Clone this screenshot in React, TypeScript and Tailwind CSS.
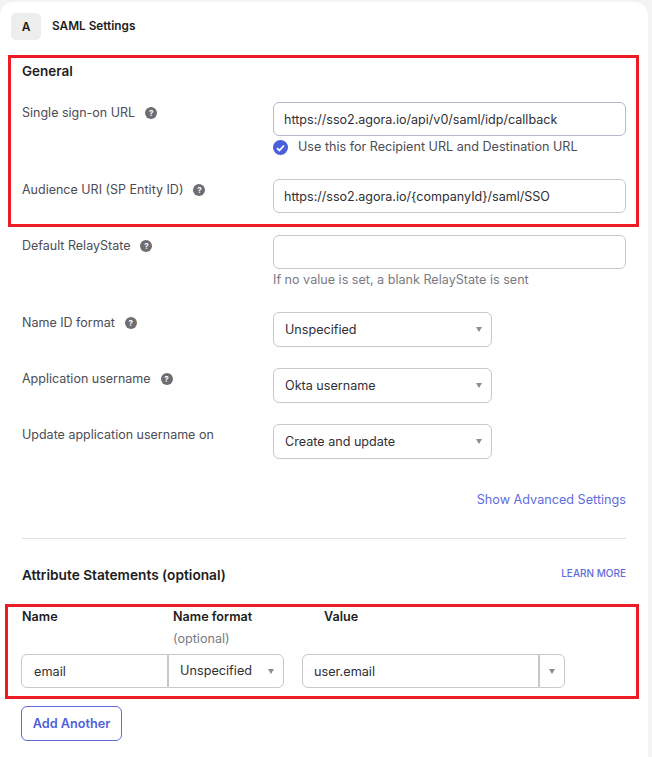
import type { ReactNode } from "react";

function HelpIcon() {
  return (
    <span className="ml-[10px] flex h-3 w-3 shrink-0 items-center justify-center rounded-full bg-[#6e6e72] text-[8px] font-bold leading-none text-white">
      ?
    </span>
  );
}

function Caret() {
  return <span className="h-0 w-0 border-x-[3px] border-t-[5px] border-x-transparent border-t-[#8c8c96]" />;
}

function SelectBox({ value }: { value: string }) {
  return (
    <div className="flex h-[35px] w-[219px] items-center justify-between rounded-[6px] border border-[#c8c8c8] pl-[11px] pr-[9px] text-[12.6px] text-[#2f2f36]">
      <span className="translate-y-px">{value}</span>
      <Caret />
    </div>
  );
}

function TextBox({ value, border = "border-[#c8c8c8]" }: { value?: string; border?: string }) {
  return (
    <div className={`flex h-[34px] w-[353px] items-center rounded-[6px] border pl-[10px] text-[12.55px] text-[#2f2f36] ${border}`}>
      <span className="translate-y-px">{value}</span>
    </div>
  );
}

function Row({ label, help, className, children }: { label: string; help?: boolean; className: string; children: ReactNode }) {
  return (
    <div className={`flex ${className}`}>
      <div className="flex h-[20px] w-[251px] shrink-0 translate-y-px items-center text-[12.5px] text-[#4c4c54]">
        {label}
        {help && <HelpIcon />}
      </div>
      <div>{children}</div>
    </div>
  );
}

export default function App() {
  return (
    <div className="relative h-[757px] w-[652px] overflow-hidden bg-[#f3f3f3] pt-[2px] font-['Inter',sans-serif]">
      <div className="h-[755px] w-[648px] rounded-t-[14px] bg-white">
        <div className="flex items-center pl-[11px] pt-[11px]">
          <div className="flex h-[27px] w-[30px] items-center justify-center rounded-[5px] bg-[#ededed] text-[12px] font-semibold text-[#1d1d21]">
            A
          </div>
          <div className="ml-[11px] text-[11.8px] font-semibold text-[#1d1d21]">SAML Settings</div>
        </div>

        <div className="ml-[22px] mr-[22px]">
          <h2 className="mt-[22px] h-[18px] text-[13.5px] font-semibold leading-[18px] text-[#1d1d21]">General</h2>

          <Row label="Single sign-on URL" help className="mt-[22px]">
            <TextBox value="https://sso2.agora.io/api/v0/saml/idp/callback" border="border-[#b4b7cf]" />
            <div className="mt-[1px] flex h-[21px] items-center text-[12.6px] text-[#4c4c54]">
              <span className="flex h-[15px] w-[15px] items-center justify-center rounded-full bg-[#4b5fdc]">
                <svg width="9" height="8" viewBox="0 0 9 8" fill="none">
                  <path d="M1 4.2 3.4 6.5 8 1.5" stroke="white" strokeWidth="1.8" />
                </svg>
              </span>
              <span className="ml-[10px]">Use this for Recipient URL and Destination URL</span>
            </div>
          </Row>

          <Row label="Audience URI (SP Entity ID)" help className="mt-[21px]">
            <TextBox value="https://sso2.agora.io/{companyId}/saml/SSO" />
          </Row>

          <Row label="Default RelayState" help className="mt-[22px]">
            <TextBox />
            <p className="h-[22px] text-[12.6px] leading-[21px] text-[#7a7a82]">If no value is set, a blank RelayState is sent</p>
          </Row>

          <Row label="Name ID format" help className="mt-[21px]">
            <SelectBox value="Unspecified" />
          </Row>

          <Row label="Application username" help className="mt-[21px]">
            <SelectBox value="Okta username" />
          </Row>

          <Row label="Update application username on" className="mt-[21px]">
            <SelectBox value="Create and update" />
          </Row>

          <div className="mt-[32px] text-right text-[12.65px] leading-[18px] text-[#5f6ce0]">Show Advanced Settings</div>

          <div className="mt-[29px] h-px w-[604px] bg-[#e2e2e2]" />

          <div className="mt-[27px] flex items-center justify-between">
            <h2 className="h-[18px] text-[13.7px] font-semibold leading-[18px] text-[#1d1d21]">Attribute Statements (optional)</h2>
            <span className="-translate-y-[2px] text-[10px] font-medium text-[#5f6ce0]">LEARN MORE</span>
          </div>

          <div className="mt-[24px] flex h-[18px] text-[12.6px] font-semibold leading-[18px] text-[#1d1d21]">
            <span className="w-[151px]">Name</span>
            <span className="w-[151px]">Name format</span>
            <span>Value</span>
          </div>
          <div className="ml-[151px] mt-[4px] h-[18px] text-[12.6px] leading-[18px] text-[#7a7a82]">(optional)</div>

          <div className="-ml-px mt-[6px] flex text-[12.7px] text-[#2f2f36]">
            <div className="flex h-[34px] w-[147px] items-center rounded-l-[6px] border border-[#c8c8c8] pl-[12px] pt-px">email</div>
            <div className="flex h-[34px] w-[116px] items-center justify-between rounded-r-[6px] border border-[#c8c8c8] pl-[11px] pr-[9px]">
              <span>Unspecified</span>
              <Caret />
            </div>
            <div className="ml-[18px] flex h-[34px] w-[237px] items-center rounded-l-[6px] border border-[#c8c8c8] pl-[11px] pt-px">user.email</div>
            <div className="flex h-[34px] w-[26px] items-center justify-center rounded-r-[6px] border border-[#c8c8c8]">
              <Caret />
            </div>
          </div>

          <button className="mt-[18px] h-[35px] w-[101px] -translate-x-px rounded-[6px] border border-[#5f6ce0] text-[12.7px] font-semibold text-[#4f5fdc]">
            Add Another
          </button>
        </div>
      </div>

      <div className="absolute left-[8px] top-[55px] h-[172px] w-[631px] border-[3px] border-[#ed1c24]" />
      <div className="absolute left-[5px] top-[604px] h-[95px] w-[634px] border-[3px] border-[#ed1c24]" />
    </div>
  );
}
